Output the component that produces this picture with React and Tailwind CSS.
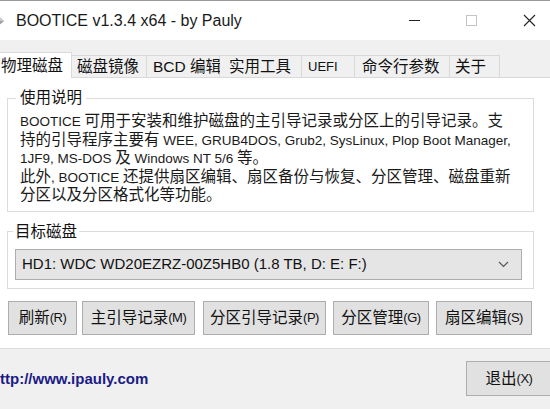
import { useState } from 'react';

const tabs = [
  { label: '物理磁盘', w: 'w-[72px]', pl: 'pl-[1px]' },
  { label: '磁盘镜像', w: 'w-[75px]', pl: 'pl-[5px]' },
  { label: 'BCD 编辑', w: 'w-[73px]', pl: 'pl-[6px]' },
  { label: '实用工具', w: 'w-[82px]', pl: 'pl-[9px]' },
  { label: 'UEFI', w: 'w-[53px]', pl: 'pl-[6px]', latin: true },
  { label: '命令行参数', w: 'w-[95px]', pl: 'pl-[7px]' },
  { label: '关于', w: 'w-[50px]', pl: 'pl-[5px]' },
];

const buttons = [
  { label: '刷新', key: '(R)', cls: 'w-[69px] ml-[8px]' },
  { label: '主引导记录', key: '(M)', cls: 'w-[113px] ml-[5px]' },
  { label: '分区引导记录', key: '(P)', cls: 'w-[123px] ml-[8px]' },
  { label: '分区管理', key: '(G)', cls: 'w-[96px] ml-[7px]' },
  { label: '扇区编辑', key: '(S)', cls: 'w-[96px] ml-[7px]' },
];

const L = ({ children }) => <span className="text-[13.5px]">{children}</span>;

const WinButton = ({ label, k, className }) => (
  <button
    type="button"
    className={`h-[34px] flex items-center justify-center border border-[#adadad] bg-[#e1e1e1] text-[15.5px] text-[#111] ${className}`}
  >
    <span>{label}</span>
    <span className="text-[13px] tracking-[-0.5px]">{k}</span>
  </button>
);

export default function App() {
  const [active, setActive] = useState(0);

  return (
    <div className="w-[550px] h-[409px] overflow-hidden flex flex-col bg-[#f0f0f0] font-['Liberation_Sans','Noto_Sans_CJK_SC',sans-serif] text-black">
      {/* title bar */}
      <div className="h-[40px] shrink-0 bg-white border-t border-[#9a9a9a] flex items-center relative">
        <svg width="10" height="14" viewBox="0 0 10 14" className="-ml-[4px]">
          <path d="M1 1 L8 7 L1 13 Z" fill="#9aa0a6" />
          <path d="M1 1 L8 7 L4 7 Z" fill="#c8ccd0" />
        </svg>
        <span className="ml-[10px] text-[16px] text-[#1a1a1a] leading-none">BOOTICE v1.3.4 x64 - by Pauly</span>
        <div className="ml-auto flex items-center h-full">
          <div className="w-[11px] h-[1px] bg-[#222] mr-[46px]" />
          <div className="w-[11px] h-[11px] border border-[#c4c4c4] mr-[46px]" />
          <svg width="13" height="13" viewBox="0 0 13 13" className="mr-[14px]">
            <path d="M1 1 L12 12 M12 1 L1 12" stroke="#222" strokeWidth="1.1" />
          </svg>
        </div>
      </div>

      {/* tab strip */}
      <div className="h-[37px] shrink-0 flex items-end">
        {tabs.map((t, i) => {
          const sel = i === active;
          return (
            <div
              key={t.label}
              onClick={() => setActive(i)}
              className={`${t.w} ${t.pl} flex items-center border-[#d9d9d9] border-t border-r ${
                sel ? 'h-[26px] bg-white -mb-[1px] relative z-10' : 'h-[22px] bg-[#f0f0f0] border-l-0'
              } ${t.latin ? 'text-[13px]' : 'text-[15.5px]'} text-[#111] whitespace-nowrap cursor-default`}
            >
              {t.label}
            </div>
          );
        })}
      </div>

      {/* tab page */}
      <div className="h-[272px] shrink-0 bg-white border-t border-[#d9d9d9] border-b border-b-[#dcdcdc] flex flex-col">
        <fieldset className="mt-[10px] ml-[7px] w-[527px] border border-[#dcdcdc] px-[12px] pb-[7px]">
          <legend className="-ml-[4px] px-[4px] text-[15.5px] leading-[20px] text-[#111]">使用说明</legend>
          <div className="text-[15.5px] leading-[17.5px] text-[#1a1a1a] whitespace-nowrap mt-[4px]">
            <div><L>BOOTICE </L>可用于安装和维护磁盘的主引导记录或分区上的引导记录。支</div>
            <div>持的引导程序主要有<L> WEE, GRUB4DOS, Grub2, SysLinux, Plop Boot Manager,</L></div>
            <div><L>1JF9, MS-DOS </L>及<L> Windows NT 5/6 </L>等。</div>
            <div>此外<L>, BOOTICE </L>还提供扇区编辑、扇区备份与恢复、分区管理、磁盘重新</div>
            <div>分区以及分区格式化等功能。</div>
          </div>
        </fieldset>

        <fieldset className="mt-[10px] ml-[7px] w-[527px] border border-[#dcdcdc] pl-[7px] pr-[11px] pb-[8px]">
          <legend className="-ml-[2px] px-[2px] text-[15.5px] leading-[20px] text-[#111]">目标磁盘</legend>
          <div className="mt-[7px] h-[31px] border border-[#adadad] bg-[#e5e5e5] flex items-center pl-[6px] pr-[12px]">
            <span className="text-[15px] text-[#111]">HD1: WDC WD20EZRZ-00Z5HB0 (1.8 TB, D: E: F:)</span>
            <svg width="11" height="7" viewBox="0 0 11 7" className="ml-auto">
              <path d="M1 1 L5.5 5.5 L10 1" fill="none" stroke="#555" strokeWidth="1.2" />
            </svg>
          </div>
        </fieldset>

        <div className="mt-[12px] flex">
          {buttons.map((b) => (
            <WinButton key={b.label} label={b.label} k={b.key} className={b.cls} />
          ))}
        </div>
      </div>

      {/* bottom bar */}
      <div className="flex-1 flex items-center overflow-hidden">
        <a href="#" className="mt-[1px] text-[15px] font-bold text-[#1b1b86]">ttp://www.ipauly.com</a>
        <WinButton label="退出" k="(X)" className="ml-auto w-[86px] -mr-[2px] h-[35px] -mt-[1px]" />
      </div>
    </div>
  );
}
